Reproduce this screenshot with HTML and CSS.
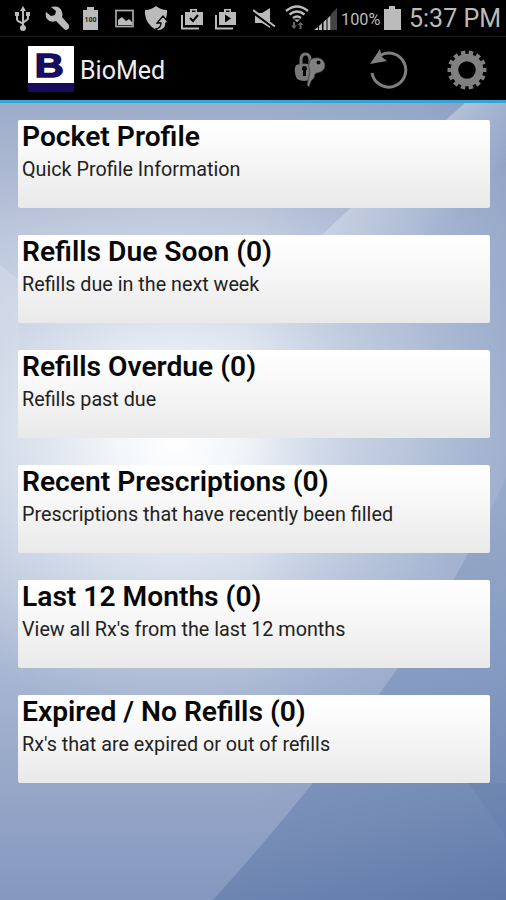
FILE: index.html
```html
<!DOCTYPE html>
<html lang="en">
<head>
    <meta charset="UTF-8">
    <meta name="viewport" content="width=device-width, initial-scale=1.0">
    <title>BioMed</title>
    <link rel="stylesheet" href="styles.css">
</head>
<body>
    <!-- wallpaper behind everything -->
    <svg class="wallpaper" viewBox="0 0 506 900" preserveAspectRatio="none">
        <defs>
            <linearGradient id="base" x1="0" y1="100" x2="0" y2="900" gradientUnits="userSpaceOnUse">
                <stop offset="0" stop-color="#9cabc8"/>
                <stop offset="0.16" stop-color="#b9c4da"/>
                <stop offset="0.42" stop-color="#cad4e4"/>
                <stop offset="0.58" stop-color="#bcc8dc"/>
                <stop offset="0.73" stop-color="#a5b4d0"/>
                <stop offset="0.88" stop-color="#93a4c6"/>
                <stop offset="1" stop-color="#8498bf"/>
            </linearGradient>
            <radialGradient id="glow" cx="0" cy="0" r="1" gradientUnits="userSpaceOnUse" gradientTransform="translate(175 440) scale(300 290)">
                <stop offset="0" stop-color="#fff"/>
                <stop offset="0.2" stop-color="#fafcfe" stop-opacity="0.85"/>
                <stop offset="0.55" stop-color="#e6ecf4" stop-opacity="0.5"/>
                <stop offset="1" stop-color="#d0d9e8" stop-opacity="0"/>
            </radialGradient>
            <linearGradient id="side" x1="250" y1="0" x2="506" y2="0" gradientUnits="userSpaceOnUse">
                <stop offset="0" stop-color="#7f95c0" stop-opacity="0"/>
                <stop offset="0.6" stop-color="#7f95bf" stop-opacity="0.25"/>
                <stop offset="1" stop-color="#7f95bd" stop-opacity="0.55"/>
            </linearGradient>
            <linearGradient id="leftfold" x1="0" y1="265" x2="0" y2="440" gradientUnits="userSpaceOnUse">
                <stop offset="0" stop-color="#e0e6ef" stop-opacity="0.35"/>
                <stop offset="1" stop-color="#e0e6ef" stop-opacity="0"/>
            </linearGradient>
            <linearGradient id="band" x1="360" y1="150" x2="440" y2="230" gradientUnits="userSpaceOnUse">
                <stop offset="0" stop-color="#d5deea" stop-opacity="0.75"/>
                <stop offset="1" stop-color="#d5deea" stop-opacity="0"/>
            </linearGradient>
            <linearGradient id="low" x1="400" y1="480" x2="506" y2="900" gradientUnits="userSpaceOnUse">
                <stop offset="0" stop-color="#9badcb"/>
                <stop offset="0.5" stop-color="#8499c0"/>
                <stop offset="0.75" stop-color="#748bb6"/>
                <stop offset="1" stop-color="#6079a8"/>
            </linearGradient>
        </defs>
        <rect width="506" height="900" fill="url(#base)"/>
        <rect width="506" height="900" fill="url(#glow)"/>
        <path d="M0 265l18 14v161H0z" fill="url(#leftfold)"/>
        <rect width="506" height="900" fill="url(#side)"/>
        <path d="M466 102 Q395 165 322 235 L300 258 L506 350 V102Z" fill="url(#band)"/>
        <path d="M506 478 Q452 595 380 693 Q315 787 213 900 H506Z" fill="url(#low)"/>
        <path d="M468 783 Q492 815 506 838 V783Z" fill="#5f79aa" fill-opacity="0.3"/>
    </svg>

    <div class="status-bar">
        <svg class="usb" width="15" height="36" fill="none" stroke="#bbb" stroke-width="2">
            <path d="M8 10V28M2 15v4q0 2 3 3l3 2M13 15v3q0 2-3 3l-2 2"/>
            <path d="M8 6l3 5H5zM0 12h4v4H0zM11 12h4v4h-4z" fill="#bbb" stroke="none"/>
            <circle cx="8" cy="28" r="3" fill="#bbb" stroke="none"/>
        </svg>
        <svg class="wrench" width="24" height="36">
            <path d="M6 7q9-2 11 5 1 3 0 5l7 8q1 2-1 4-2 2-4 0l-8-8q-6 2-9-2-2-3-1-7l5 4 4-1 1-4z" fill="#bbb"/>
        </svg>
        <svg class="mini-battery" width="15" height="36">
            <path d="M0 10h4V7h7v3h4v20H0z" fill="#bbb"/>
            <text x="7.5" y="22" class="mini-text">100</text>
        </svg>
        <svg class="picture" width="20" height="36">
            <rect x="1" y="10.5" width="17" height="16" fill="none" stroke="#aaa" stroke-width="1.7"/>
            <path d="M3 25v-5l4-3 4 4 3-2 3 3v3z" fill="#bbb"/>
        </svg>
        <svg class="shield" width="25" height="36">
            <path d="M0 10q6 0 11-4 5 4 11 4 1 13-11 20Q-1 23 0 10z" fill="#bbb"/>
            <path d="M11 29q5-1 5-6h-4l6-7 6 7h-3q0 7-8 8z" fill="#bbb" stroke="#000" stroke-width="1.3"/>
        </svg>
        <svg class="bag" width="22" height="36">
            <path d="M1 15v13.500h17" fill="none" stroke="#bbb" stroke-width="2"/>
            <path d="M4 12h5V9h7v3h6v13H4zM11 10.500v1.500h3.500v-1.500z" fill="#bbb" fill-rule="evenodd"/>
            <path d="M9 18l3 3 5-6" fill="none" stroke="#000" stroke-width="2"/>
        </svg>
        <svg class="bag" width="22" height="36">
            <path d="M1 15v13.500h17" fill="none" stroke="#bbb" stroke-width="2"/>
            <path d="M4 12h5V9h7v3h5v13H4zM11 10.500v1.500h3.500v-1.500z" fill="#bbb" fill-rule="evenodd"/>
            <path d="M10 14.500v8l6-4z" fill="#000"/>
        </svg>
        <svg class="mute" width="24" height="36">
            <path d="M2 13h7l8-5v20l-8-5H2z" fill="#bbb"/>
            <path d="M0 12.500l22 16" stroke="#000" stroke-width="2.500"/>
            <path d="M0 10l22 16.500" stroke="#bbb" stroke-width="2"/>
        </svg>
        <svg class="wifi" width="24" height="36" fill="none" stroke="#bbb" stroke-width="2.300">
            <path d="M1 11q11-9 22 0M4.500 14.500q7.500-6 15 0M8 18q4-3 8 0"/>
            <path d="M12 22l-3-2.500h6z" fill="#bbb" stroke="none"/>
            <path d="M9 22v6M15.500 29v-6" stroke="#666" stroke-width="2"/>
            <path d="M6 25.500h6l-3 3.500zM12.500 25h6l-3-3z" fill="#666" stroke="none"/>
        </svg>
        <svg class="signal" width="23" height="36">
            <path d="M0 30l4-3v3zM5 26l3-3v7H5zM9.500 22l3-3v11h-3zM13.500 18.500l3-3V30h-3z" fill="#bbb"/>
            <path d="M17 14l6-6v22h-6z" fill="#444"/>
        </svg>
        <span class="percent">100%</span>
        <svg class="battery" width="17" height="36">
            <path d="M0 9h5V6h6v3h6v21H0z" fill="#bbb"/>
        </svg>
        <span class="clock">5:37 PM</span>
    </div>

    <div class="action-bar">
        <svg class="logo" width="46" height="46">
            <rect width="46" height="37" fill="#fff"/>
            <rect y="37" width="46" height="9" fill="#170d5c"/>
            <text class="logo-letter" transform="translate(6.800 31.300) scale(1.180 1)">B</text>
        </svg>
        <h1>BioMed</h1>
        <svg class="keys" width="32" height="40" viewBox="0 0 32 40">
            <path d="M7 16V9q0-6 4.500-6T16 9v5" fill="none" stroke="#777" stroke-width="3"/>
            <path d="M2 14q9-3 15 0v14q-7 4-14 0-4-8-1-14z" fill="#777"/>
            <path d="M10 15q3 0 3 3l-1 2v5H9v-5l-1-2q0-3 2-3z" fill="#000"/>
            <path d="M16 9q4-3 9-2 6 2 6 8-1 6-8 7l-2 1-1 4-3 3-2 6-2-2 3-13q-3-7 0-12z" fill="#808080" stroke="#333" stroke-width="0.700"/>
            <circle cx="24.500" cy="11.500" r="2" fill="#000"/>
        </svg>
        <svg class="refresh" width="38" height="42" viewBox="0 0 38 42">
            <path d="M10 6.500A17 17 0 1 1 2 24" fill="none" stroke="#808080" stroke-width="3"/>
            <path d="M10 0L0 15l17-3-5-4z" fill="#808080"/>
        </svg>
        <svg class="gear" width="40" height="40" viewBox="-20 -20 40 40">
            <circle r="12.500" fill="none" stroke="#808080" stroke-width="7.500"/>
            <circle r="17.500" fill="none" stroke="#808080" stroke-width="4" pathLength="140" stroke-dasharray="5.500 4.500" stroke-dashoffset="2.700"/>
        </svg>
    </div>

    <div class="menu">
        <div class="card">
            <h2>Pocket Profile</h2>
            <p>Quick Profile Information</p>
        </div>
        <div class="card">
            <h2>Refills Due Soon (0)</h2>
            <p>Refills due in the next week</p>
        </div>
        <div class="card">
            <h2>Refills Overdue (0)</h2>
            <p>Refills past due</p>
        </div>
        <div class="card">
            <h2>Recent Prescriptions (0)</h2>
            <p>Prescriptions that have recently been filled</p>
        </div>
        <div class="card">
            <h2>Last 12 Months (0)</h2>
            <p>View all Rx's from the last 12 months</p>
        </div>
        <div class="card">
            <h2>Expired / No Refills (0)</h2>
            <p>Rx's that are expired or out of refills</p>
        </div>
    </div>
</body>
</html>
```
FILE: styles.css
```css
body {
    margin: 0;
    height: 900px;
    overflow: hidden;
    position: relative;
    font-family: Roboto, 'Liberation Sans', sans-serif;
    color: #080808;
}

h1, h2, p {
    margin: 0;
}

svg {
    flex: none;
}

.wallpaper {
    position: absolute;
    top: 0;
    left: 0;
    width: 100%;
    height: 100%;
    z-index: -1;
}

.status-bar {
    display: flex;
    height: 36px;
    background-color: #000;
    color: #bbb;
    line-height: 36px;
    white-space: nowrap;
}

.usb { margin-left: 15px; }
.wrench { margin-left: 15px; }
.mini-battery { margin-left: 14px; }
.picture { margin-left: 17px; }
.shield { margin-left: 10px; }
.bag { margin-left: 11px; }
.bag + .bag { margin-left: 12px; }
.mute { margin-left: 16px; }
.wifi { margin-left: 8px; }
.signal { margin-left: 5px; }

.mini-text {
    font-size: 7px;
    font-weight: bold;
    text-anchor: middle;
    fill: #222;
}

.percent {
    width: 43px;
    margin-left: 4px;
    font-size: 16.300px;
    line-height: 39px;
}

.clock {
    margin-left: 8px;
    font-size: 25px;
    line-height: 38px;
}

.action-bar {
    display: flex;
    align-items: center;
    box-sizing: border-box;
    height: 67px;
    padding: 1px 19px 0 28px;
    background-color: #000;
    border-top: 1px solid #1c1c1c;
    border-bottom: 3px solid #35a5d4;
}

.logo {
    overflow: visible;
}

.logo-letter {
    font-family: 'Liberation Sans', sans-serif;
    font-size: 34px;
    font-weight: bold;
    fill: #170d5c;
    stroke: #170d5c;
    stroke-width: 1.500px;
}

.action-bar h1 {
    margin-left: 6px;
    padding-top: 2px;
    font-size: 25px;
    font-weight: normal;
    color: #eee;
}

.keys {
    margin-left: auto;
    padding-top: 4px;
}
.refresh {
    margin-left: 44px;
    padding-top: 2px;
}
.gear {
    margin-left: 39px;
    padding-top: 2px;
}

.menu {
    display: flex;
    flex-direction: column;
    gap: 27px;
    padding: 17px 16px 0 18px;
}

.card {
    box-sizing: border-box;
    height: 88px;
    padding: 0 4px;
    border-radius: 2px;
    background: linear-gradient(#fff, #fbfbfb 25%, #e9e9e9);
    white-space: nowrap;
}

.card h2 {
    font-size: 28.200px;
    font-weight: 600;
    line-height: 34px;
}

.card p {
    font-size: 19.750px;
    line-height: 31px;
    color: #222;
}
```
